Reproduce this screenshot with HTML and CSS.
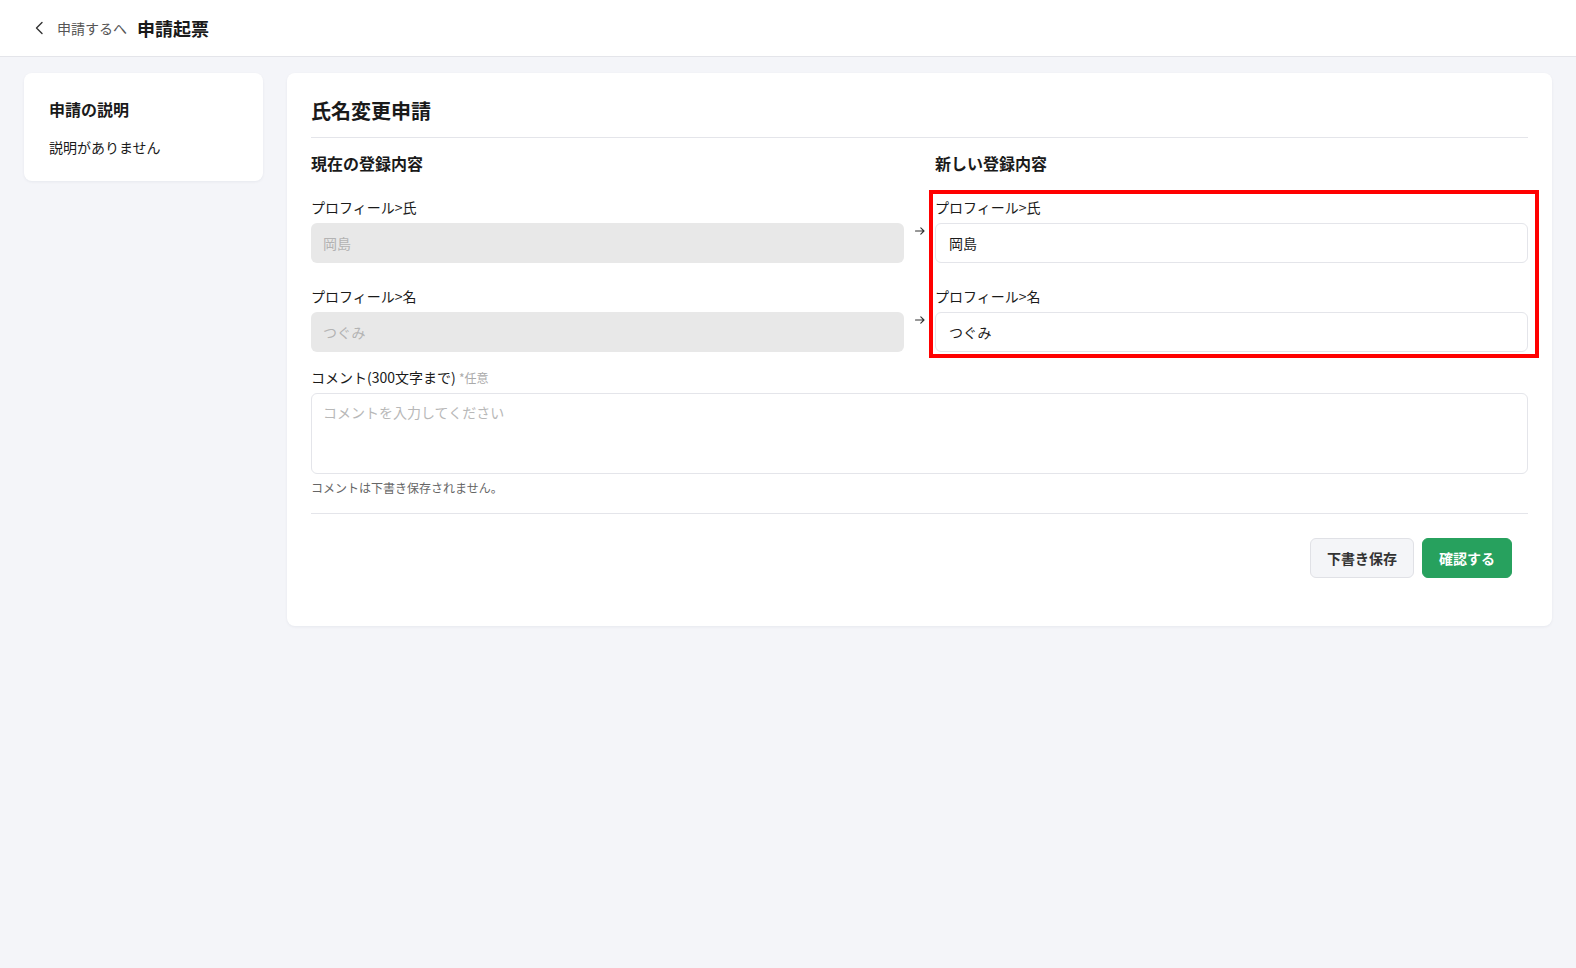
FILE: index.html
```html
<!DOCTYPE html>
<html lang="ja">
<head>
<meta charset="utf-8">
<title>申請起票</title>
<link rel="stylesheet" href="styles.css">
</head>
<body>

<header class="top-bar">
  <a class="back-link" href="#">
    <svg class="back-icon" width="16" height="16" viewBox="0 0 16 16"><path d="M10 2.5 4.5 8 10 13.5" fill="none" stroke="#333" stroke-width="1.4" stroke-linecap="round" stroke-linejoin="round"/></svg>
    申請するへ
  </a>
  <h1 class="page-title">申請起票</h1>
</header>

<div class="page-body">
  <aside class="card side-card">
    <h2 class="side-title">申請の説明</h2>
    <p class="side-text">説明がありません</p>
  </aside>

  <main class="card form-card">
    <h2 class="form-title">氏名変更申請</h2>

    <div class="compare">
      <h3 class="col-heading">現在の登録内容</h3>
      <div></div>
      <h3 class="col-heading">新しい登録内容</h3>

      <div class="fields">
        <div class="field">
          <label class="field-label">プロフィール&gt;氏</label>
          <input class="text-input is-disabled" value="岡島" disabled>
        </div>
        <div class="field">
          <label class="field-label">プロフィール&gt;名</label>
          <input class="text-input is-disabled" value="つぐみ" disabled>
        </div>
      </div>

      <div class="arrows">
        <svg class="arrow" width="10" height="8" viewBox="0 0 10 8"><path d="M0.5 4h8.5M5.8 0.8 9 4 5.8 7.2" fill="none" stroke="#333" stroke-width="1.1" stroke-linecap="round" stroke-linejoin="round"/></svg>
        <svg class="arrow" width="10" height="8" viewBox="0 0 10 8"><path d="M0.5 4h8.5M5.8 0.8 9 4 5.8 7.2" fill="none" stroke="#333" stroke-width="1.1" stroke-linecap="round" stroke-linejoin="round"/></svg>
      </div>

      <div class="fields is-highlighted">
        <div class="field">
          <label class="field-label">プロフィール&gt;氏</label>
          <input class="text-input" value="岡島">
        </div>
        <div class="field">
          <label class="field-label">プロフィール&gt;名</label>
          <input class="text-input" value="つぐみ">
        </div>
      </div>
    </div>

    <div class="comment">
      <label class="field-label">コメント(300文字まで) <span class="optional">*任意</span></label>
      <textarea class="comment-box" placeholder="コメントを入力してください"></textarea>
      <p class="hint">コメントは下書き保存されません。</p>
    </div>

    <div class="form-footer">
      <button class="btn btn-draft">下書き保存</button>
      <button class="btn btn-primary">確認する</button>
    </div>
  </main>
</div>

</body>
</html>
```

FILE: styles.css
```css
* {
  box-sizing: border-box;
}

body {
  margin: 0;
  background-color: #f4f5f9;
  color: #1a1a1a;
  font-family: "Noto Sans CJK JP", "Noto Sans", sans-serif;
  font-size: 14px;
  line-height: 20px;
}

h1, h2, h3, p {
  margin: 0;
}

/* Top bar */
.top-bar {
  display: flex;
  align-items: center;
  height: 57px;
  padding: 0 0 0 32px;
  background-color: #fff;
  border-bottom: 1px solid #e4e5ea;
}

.back-link {
  display: flex;
  align-items: center;
  color: #555;
  font-size: 14px;
  text-decoration: none;
}

.back-icon {
  margin-right: 9px;
}

.page-title {
  margin-left: 10px;
  font-size: 18px;
  font-weight: 700;
}

/* Body layout */
.page-body {
  display: flex;
  align-items: flex-start;
  gap: 24px;
  padding: 16px 24px;
}

.card {
  background-color: #fff;
  border-radius: 8px;
  box-shadow: 0 1px 3px rgba(20, 30, 60, 0.06);
}

.side-card {
  width: 239px;
  flex-shrink: 0;
  padding: 24px 25px;
}

.side-title {
  font-size: 16px;
  line-height: 24px;
  font-weight: 700;
  margin-bottom: 16px;
}

.form-card {
  flex: 1;
  padding: 24px 24px 24px;
}

.form-title {
  font-size: 20px;
  line-height: 28px;
  font-weight: 700;
  padding-bottom: 12px;
  border-bottom: 1px solid #e4e5ea;
}

/* Before / after columns */
.compare {
  display: grid;
  grid-template-columns: 1fr 31px 1fr;
  row-gap: 22px;
  margin-top: 13px;
}

.col-heading {
  font-size: 16px;
  line-height: 24px;
  font-weight: 700;
}

.fields {
  display: flex;
  flex-direction: column;
  gap: 23px;
}

.fields.is-highlighted {
  position: relative;
}

.fields.is-highlighted::after {
  content: '';
  position: absolute;
  top: -7px;
  left: -6px;
  right: -11px;
  bottom: -6px;
  border: 4px solid #ff0000;
  pointer-events: none;
}

.field {
  display: flex;
  flex-direction: column;
}

.field-label {
  display: block;
  font-size: 14px;
  line-height: 20px;
  margin-bottom: 6px;
}

.text-input {
  height: 40px;
  padding: 0 13px;
  border: 1px solid #e4e5ea;
  border-radius: 6px;
  background-color: #fff;
  color: #1a1a1a;
  font-family: inherit;
  font-size: 14px;
}

.text-input.is-disabled {
  padding: 0 12px;
  border: none;
  background-color: #e8e8e8;
  color: #b3b3b3;
}

.arrows {
  display: flex;
  flex-direction: column;
  align-items: center;
  gap: 81px;
  padding-top: 30px;
}

.arrow {
  display: block;
}

/* Comment */
.comment {
  margin-top: 15px;
}

.comment .field-label {
  margin-bottom: 5px;
}

.optional {
  color: #aaa;
  font-size: 12px;
}

.comment-box {
  display: block;
  width: 100%;
  height: 81px;
  padding: 8px 11px;
  border: 1px solid #e4e5ea;
  border-radius: 6px;
  font-family: inherit;
  font-size: 14px;
  line-height: 20px;
  resize: none;
}

.comment-box::placeholder {
  color: #b8b8b8;
}

.hint {
  margin-top: 5px;
  font-size: 12px;
  line-height: 18px;
  color: #666;
}

/* Footer buttons */
.form-footer {
  display: flex;
  justify-content: flex-end;
  gap: 8px;
  margin-top: 16px;
  padding: 24px 16px 24px 0;
  border-top: 1px solid #e4e5ea;
}

.btn {
  height: 40px;
  padding: 0 16px;
  border-radius: 6px;
  font-family: inherit;
  font-size: 14px;
  font-weight: 700;
  cursor: pointer;
}

.btn-draft {
  background-color: #f4f5f8;
  border: 1px solid #e0e1e6;
  color: #333;
}

.btn-primary {
  background-color: #27a15e;
  border: 1px solid #27a15e;
  color: #fff;
}
```
